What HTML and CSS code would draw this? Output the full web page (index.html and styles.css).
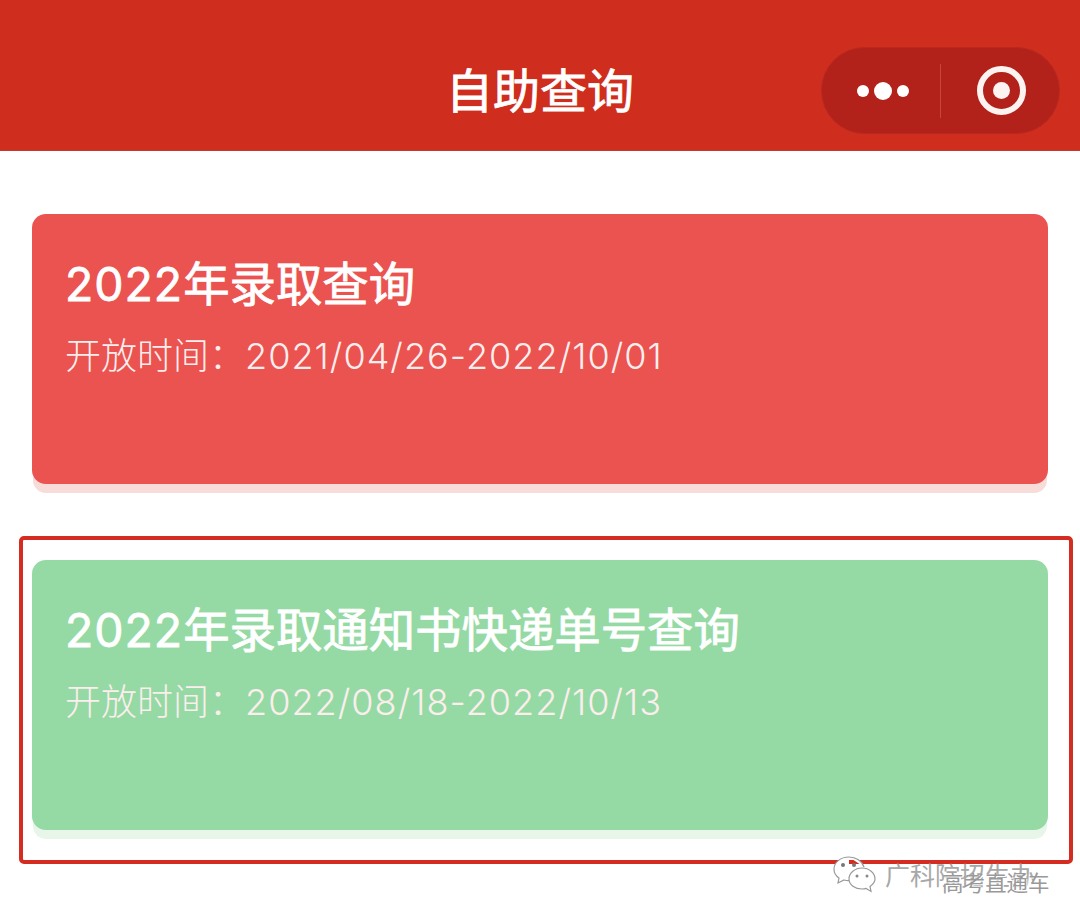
FILE: index.html
```html
<!DOCTYPE html>
<html>
<head>
<meta name="viewport" content="width=device-width, initial-scale=1">
<link rel="stylesheet" href="styles.css">
</head>
<body>
  <div class="header">
    <h2>自助查询</h2>
    <div class="capsule">
      <div class="capsule-part">
        <span class="dot"></span><span class="dot big"></span><span class="dot"></span>
      </div>
      <div class="capsule-line"></div>
      <div class="capsule-part">
        <span class="target"><span class="target-in"></span></span>
      </div>
    </div>
  </div>

  <div class="list">
    <div class="card red">
      <h3><span class="num">2022</span>年录取查询</h3>
      <p>开放时间：<span class="num">2021/04/26-2022/10/01</span></p>
    </div>
    <div class="mark">
      <div class="card green">
        <h3><span class="num">2022</span>年录取通知书快递单号查询</h3>
        <p>开放时间：<span class="num">2022/08/18-2022/10/13</span></p>
      </div>
    </div>
  </div>

  <div class="watermark">
    <svg class="wechat" width="44" height="38" viewBox="0 0 44 38">
      <path d="M16 1C8 1 1 6 1 13c0 4 2 7 5 9l-1 5 6-3c2 .5 3 .6 5 .6" fill="#fff" stroke="#999" stroke-width="1.2"/>
      <path d="M16 1c7 0 13 4 15 10" fill="#fff" stroke="#999" stroke-width="1.2"/>
      <circle cx="10" cy="9" r="2" fill="#777"/>
      <circle cx="21" cy="9" r="2" fill="#777"/>
      <path d="M29 12c-7 0-13 5-13 11s6 10 13 10c1.500 0 3-.2 4-.6l5 3-1-5c3-2 5-4.500 5-7.400 0-6-6-11-13-11z" fill="#fff" stroke="#999" stroke-width="1.2"/>
      <circle cx="24" cy="20" r="1.500" fill="#888"/>
      <circle cx="34" cy="20" r="1.500" fill="#888"/>
    </svg>
    <span class="wm-name">广科院招生办</span>
    <span class="wm-sub">高考直通车</span>
  </div>
</body>
</html>
```

FILE: styles.css
```css
* {
  box-sizing: border-box;
}

body {
  margin: 0;
  background: #fff;
  font-family: Inter, "Noto Sans CJK SC", sans-serif;
  position: relative;
  height: 924px;
  overflow: hidden;
}

/* top bar */
.header {
  height: 151px;
  background: #cf2d1e;
  border-bottom: 1px solid #c2392f;
  padding-top: 30px;
  display: flex;
  align-items: center;
  justify-content: center;
  position: relative;
}

.header h2 {
  margin: 0;
  color: #fff;
  font-size: 47px;
  font-weight: 400;
  -webkit-text-stroke: 0.8px #fff;
  line-height: 1;
}

/* mini program capsule */
.capsule {
  position: absolute;
  left: 821px;
  top: 47px;
  width: 239px;
  height: 87px;
  border-radius: 44px;
  background: #b2221a;
  border: 1px solid #b9291e;
  display: flex;
  align-items: center;
}

.capsule-part {
  flex: 1;
  display: flex;
  align-items: center;
  justify-content: center;
  gap: 5px;
}

.capsule-line {
  width: 1px;
  height: 54px;
  background: #c5483c;
}

.dot {
  width: 12px;
  height: 12px;
  border-radius: 50%;
  background: #fff;
}

.dot:first-child {
  margin-left: 4px;
}

.dot.big {
  width: 18px;
  height: 18px;
}

.target {
  width: 49px;
  height: 49px;
  margin-left: 2px;
  border: 6px solid #fdf3f0;
  border-radius: 50%;
  display: flex;
  align-items: center;
  justify-content: center;
}

.target-in {
  width: 17px;
  height: 17px;
  border-radius: 50%;
  background: #fdf3f0;
}

/* cards */
.list {
  padding: 63px 32px 0;
}

.card {
  height: 270px;
  border-radius: 14px;
  padding: 43px 33px 0;
  color: #fff;
}

.card h3 {
  margin: 0;
  font-size: 46.4px;
  font-weight: 400;
  -webkit-text-stroke: 0.8px #fff;
  line-height: 54px;
}

.card h3 .num {
  letter-spacing: 1px;
}

.card p {
  margin: 24px 0 0;
  font-size: 36px;
  font-weight: 300;
  line-height: 42px;
  color: #fdeeee;
}

.card p .num {
  letter-spacing: 1.05px;
}

.red {
  background: #ea5350;
  box-shadow: 0 10px 0 -1px #f7dcda;
}

.green {
  background: #95daa4;
  box-shadow: 0 10px 0 -1px #e8f6ea;
}

/* red box drawn around the second card */
.mark {
  margin: 52px -25px 0 -13px;
  border: 4px solid #d42c20;
  border-radius: 5px;
  padding: 20px 21px 30px 9px;
}

.watermark {
  position: absolute;
  left: 833px;
  top: 856px;
  width: 230px;
  height: 44px;
}

.wechat {
  position: absolute;
  left: 0;
  top: 0;
}

.wm-name {
  position: absolute;
  left: 52px;
  top: 3px;
  font-size: 25px;
  line-height: 34px;
  white-space: nowrap;
  color: #a8a8a8;
  text-shadow: 1px 1px 0 #fff;
}

.wm-sub {
  position: absolute;
  left: 109px;
  top: 12px;
  font-size: 21.5px;
  line-height: 30px;
  white-space: nowrap;
  color: #999;
  text-shadow: 1px 1px 0 #fff;
}
```
